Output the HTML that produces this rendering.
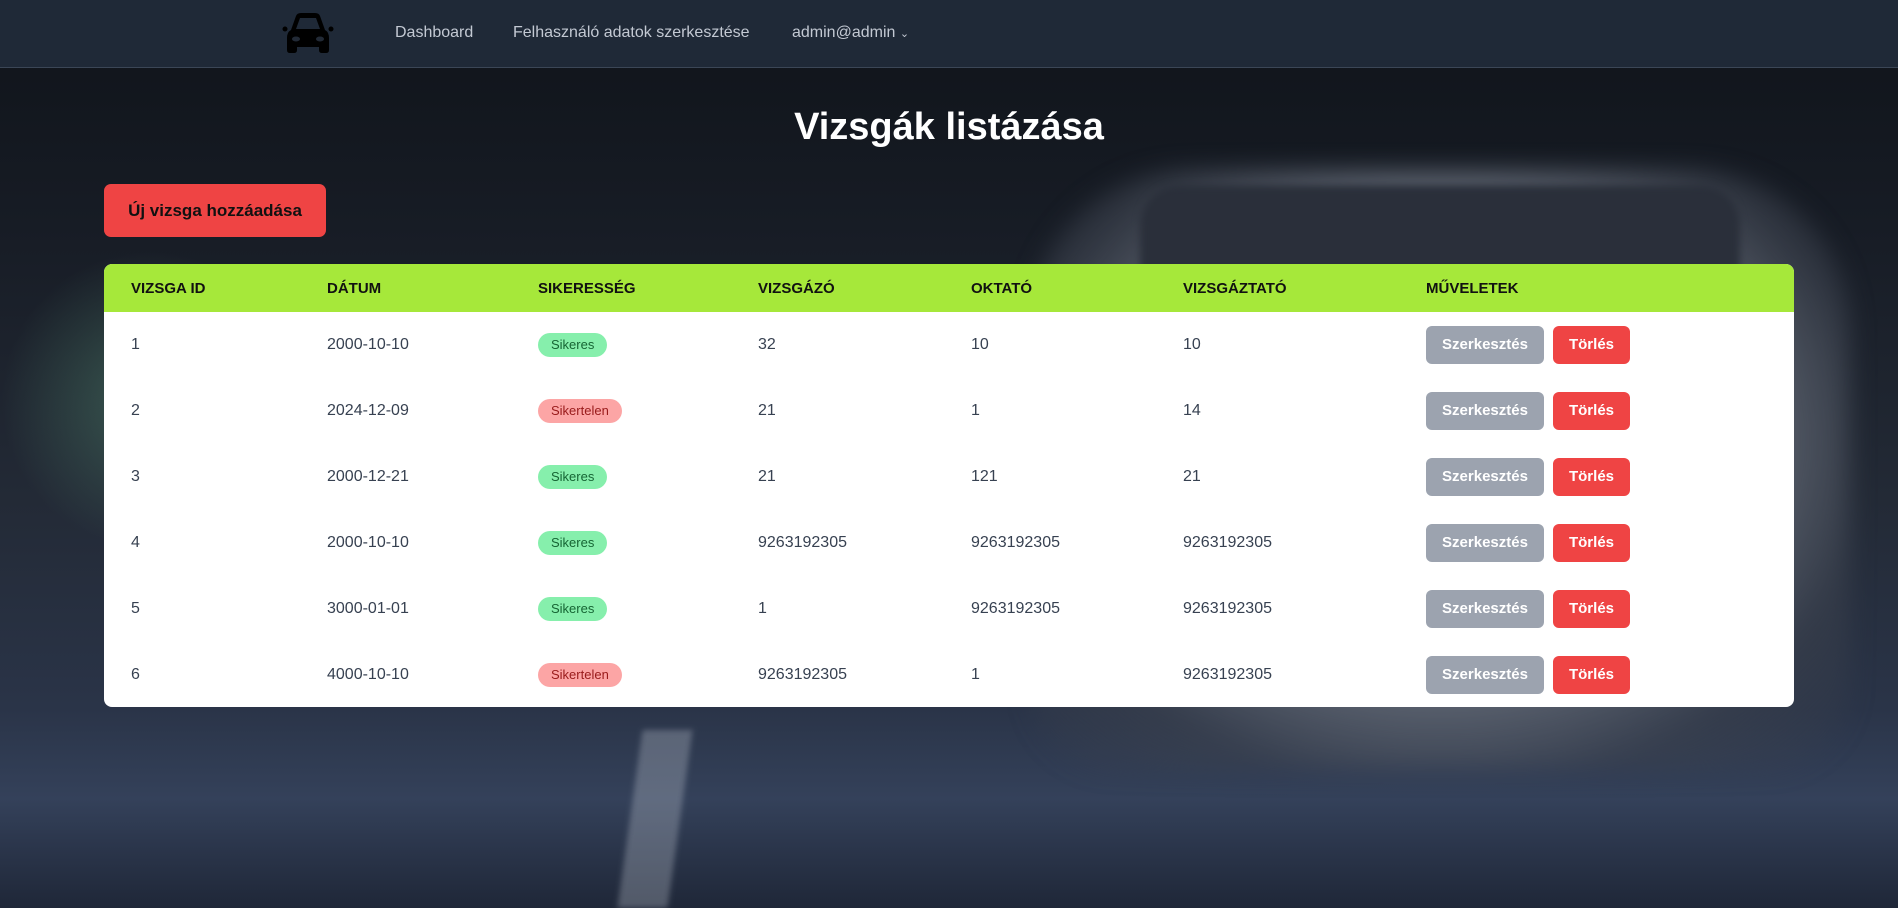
<!DOCTYPE html>
<html><head><meta charset="utf-8"><style>
*{box-sizing:border-box;margin:0;padding:0}
html,body{width:1898px;height:908px;overflow:hidden}
body{font-family:"Liberation Sans",sans-serif;position:relative;
background:linear-gradient(180deg,#0f1319 0%,#171c25 25%,#232a36 55%,#2a3448 78%,#34415a 88%,#1f2738 100%);}
.car{position:absolute;left:1030px;top:170px;width:820px;height:600px;border-radius:160px 160px 80px 80px;filter:blur(12px);
background:radial-gradient(ellipse at 50% 45%,#9097a3 0%,#6d7480 45%,rgba(60,66,78,0.6) 75%,transparent 100%);}
.win{position:absolute;left:1140px;top:185px;width:600px;height:150px;background:#2a2f3a;border-radius:40px 40px 10px 10px;filter:blur(4px)}
.glow{position:absolute;left:0;top:250px;width:300px;height:300px;background:radial-gradient(circle,rgba(90,150,120,0.45),transparent 70%)}
.road{position:absolute;left:630px;top:730px;width:50px;height:178px;background:rgba(200,205,215,0.3);transform:skewX(-8deg);filter:blur(3px)}
.nav{position:absolute;left:0;top:0;width:1898px;height:68px;background:#1f2937;border-bottom:1px solid #3b4656}
.nav a{position:absolute;top:24px;color:#c3c9d3;font-size:16px}
h1{position:absolute;left:0;width:1898px;top:106px;text-align:center;color:#fff;font-size:38px;font-weight:bold}
.add{position:absolute;left:104px;top:184px;width:222px;height:53px;background:#ef4444;border-radius:7px;color:#111;font-size:17px;font-weight:bold;line-height:53px;text-align:center}
.tbl{position:absolute;left:104px;top:264px;width:1690px;height:443px;background:#fff;border-radius:8px;overflow:hidden}
.hd{height:48px;background:#a6e83a;position:relative}
.hd span{position:absolute;top:16px;font-size:15px;font-weight:bold;color:#111}
.row{height:66px;position:relative;color:#374151;font-size:16px}
.row span{position:absolute;top:24px}
.b{position:absolute!important;top:21px!important;height:24px;border-radius:12px;font-size:13px;line-height:24px;padding:0 13px}
.ok{background:#86efac;color:#166534}.no{background:#fca5a5;color:#991b1b}
.e,.d{position:absolute;top:14px;height:38px;border-radius:6px;color:#fff;font-weight:bold;font-size:15px;line-height:38px;text-align:center}
.e{left:1322px;width:118px;background:#9ca3af}.d{left:1449px;width:77px;background:#ef4444}
</style></head><body>
<div class="glow"></div><div class="car"></div><div class="win"></div><div class="road"></div>
<div class="nav">
<svg style="position:absolute;left:281px;top:12px" width="54" height="42" viewBox="0 0 54 42"><path d="M10 18 L15 4 Q16 1 20 1 H34 Q38 1 39 4 L44 18 Q48 20 48 26 V38 Q48 41 45 41 H41 Q38 41 38 38 V35 H16 V38 Q16 41 13 41 H9 Q6 41 6 38 V26 Q6 20 10 18Z M15 17 H39 L35 6 H19Z" fill="#000" fill-rule="evenodd"/><circle cx="4" cy="17" r="2.5" fill="#000"/><circle cx="50" cy="17" r="2.5" fill="#000"/><ellipse cx="15" cy="27" rx="4" ry="2.5" fill="#222a36"/><ellipse cx="39" cy="27" rx="4" ry="2.5" fill="#222a36"/></svg>
<a style="left:395px">Dashboard</a>
<a style="left:513px">Felhasználó adatok szerkesztése</a>
<a style="left:792px">admin@admin <span style="font-size:11px">&#8964;</span></a>
</div>
<h1>Vizsgák listázása</h1>
<div class="add">Új vizsga hozzáadása</div>
<div class="tbl">
<div class="hd"><span style="left:27px">VIZSGA ID</span><span style="left:223px">DÁTUM</span><span style="left:434px">SIKERESSÉG</span><span style="left:654px">VIZSGÁZÓ</span><span style="left:867px">OKTATÓ</span><span style="left:1079px">VIZSGÁZTATÓ</span><span style="left:1322px">MŰVELETEK</span></div>
<div class="row"><span style="left:27px">1</span><span style="left:223px">2000-10-10</span><span class="b ok" style="left:434px">Sikeres</span><span style="left:654px">32</span><span style="left:867px">10</span><span style="left:1079px">10</span><div class="e">Szerkesztés</div><div class="d">Törlés</div></div>
<div class="row"><span style="left:27px">2</span><span style="left:223px">2024-12-09</span><span class="b no" style="left:434px">Sikertelen</span><span style="left:654px">21</span><span style="left:867px">1</span><span style="left:1079px">14</span><div class="e">Szerkesztés</div><div class="d">Törlés</div></div>
<div class="row"><span style="left:27px">3</span><span style="left:223px">2000-12-21</span><span class="b ok" style="left:434px">Sikeres</span><span style="left:654px">21</span><span style="left:867px">121</span><span style="left:1079px">21</span><div class="e">Szerkesztés</div><div class="d">Törlés</div></div>
<div class="row"><span style="left:27px">4</span><span style="left:223px">2000-10-10</span><span class="b ok" style="left:434px">Sikeres</span><span style="left:654px">9263192305</span><span style="left:867px">9263192305</span><span style="left:1079px">9263192305</span><div class="e">Szerkesztés</div><div class="d">Törlés</div></div>
<div class="row"><span style="left:27px">5</span><span style="left:223px">3000-01-01</span><span class="b ok" style="left:434px">Sikeres</span><span style="left:654px">1</span><span style="left:867px">9263192305</span><span style="left:1079px">9263192305</span><div class="e">Szerkesztés</div><div class="d">Törlés</div></div>
<div class="row"><span style="left:27px">6</span><span style="left:223px">4000-10-10</span><span class="b no" style="left:434px">Sikertelen</span><span style="left:654px">9263192305</span><span style="left:867px">1</span><span style="left:1079px">9263192305</span><div class="e">Szerkesztés</div><div class="d">Törlés</div></div>
</div>
</body></html>
